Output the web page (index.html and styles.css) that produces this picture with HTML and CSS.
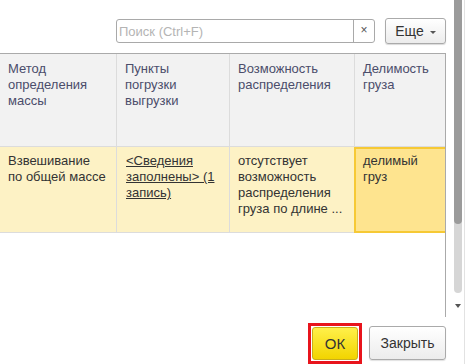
FILE: index.html
```html
<!DOCTYPE html>
<html>
<head>
    <meta charset="utf-8" />
    <title>Сведения о грузе</title>
    <link rel="stylesheet" href="styles.css">
</head>
<body>
    <div class="form">
        <div class="main">
            <!-- панель поиска -->
            <div class="toolbar">
                <div class="search">
                    <span class="search-text">Поиск (Ctrl+F)</span>
                    <span class="search-clear">×</span>
                </div>
                <div class="btn more">Еще <span class="caret"></span></div>
            </div>
            <!-- таблица -->
            <div class="table">
                <div class="cell head">Метод определения массы</div>
                <div class="cell head">Пункты погрузки выгрузки</div>
                <div class="cell head">Возможность распределения</div>
                <div class="cell head">Делимость груза</div>

                <div class="cell row">Взвешивание по&nbsp;общей массе</div>
                <div class="cell row"><a class="link">&lt;Сведения заполнены&gt; (1 запись)</a></div>
                <div class="cell row">отсутствует возможность распределения груза по длине ...</div>
                <div class="cell row current">делимый груз</div>
            </div>
            <!-- кнопки -->
            <div class="footer">
                <span class="focus"><span class="btn ok">ОК</span></span>
                <span class="btn close">Закрыть</span>
            </div>
        </div>
        <!-- полоса прокрутки -->
        <div class="scroll">
            <div class="track"><div class="thumb"></div></div>
            <div class="arrow"></div>
        </div>
        <div class="edge"></div>
    </div>
</body>
</html>
```

FILE: styles.css
```css
/*сброс*/
html, body{
    margin: 0;
    padding: 0;
}
body{
    width: 469px;
    height: 364px;
    overflow: hidden;
    background: #fff;
    font-family: "Liberation Sans", Arial, sans-serif;
    font-size: 13px;
    color: #333;
}
.form{
    display: flex;
    height: 364px;
}
.main{
    width: 446px;
    display: flex;
    flex-direction: column;
}
/*панель поиска*/
.toolbar{
    height: 53px;
    box-sizing: border-box;
    padding-top: 18px;
    display: flex;
    justify-content: flex-end;
    align-items: flex-start;
}
.search{
    margin-top: 1px;
    width: 259px;
    height: 24px;
    box-sizing: border-box;
    border: 1px solid #a9a9a9;
    border-radius: 3px;
    display: flex;
    align-items: center;
}
.search-text{
    flex: 1;
    padding-left: 2px;
    color: #b4b4b4;
}
.search-clear{
    width: 20px;
    height: 22px;
    line-height: 21px;
    text-align: center;
    border-left: 1px solid #a9a9a9;
    color: #555;
    font-size: 12px;
}
.btn{
    box-sizing: border-box;
    border: 1px solid #aaa;
    border-radius: 3px;
    background: linear-gradient(#ffffff, #ececec);
    display: flex;
    align-items: center;
    justify-content: center;
    color: #333;
}
.more{
    margin-left: 10px;
    width: 61px;
    height: 26px;
    font-size: 14px;
    box-shadow: 0 1px 1px rgba(0,0,0,0.15);
}
.caret{
    margin-left: 6px;
    margin-top: 2px;
    border-left: 3px solid transparent;
    border-right: 3px solid transparent;
    border-top: 3px solid #555;
}
/*таблица*/
.table{
    height: 264px;
    box-sizing: border-box;
    border-top: 1px solid #aaa;
    border-right: 1px solid #aaa;
    display: grid;
    grid-template-columns: 117px 113px 125px 90px;
    grid-template-rows: 93px 86px;
    align-content: start;
}
.cell{
    box-sizing: border-box;
    border-right: 1px solid #dcdcdc;
    border-bottom: 1px solid #dcdcdc;
    padding: 7px 8px 0 8px;
    line-height: 16px;
}
.head{
    background: #f2f2f2;
    color: #4b4d6b;
}
.row{
    background: #fdf2c5;
    padding-top: 6px;
}
.row:nth-child(6){
    padding-left: 9px;
}
.link{
    color: #333;
    text-decoration: underline;
}
.current{
    border: 2px solid #f6c935;
    background: #fee48f;
    padding: 4px 6px 0 7px;
    margin-left: -1px;
}
.head:nth-child(4), .row:nth-child(8){
    border-right: none;
}
/*кнопки*/
.footer{
    flex: 1;
    display: flex;
    justify-content: flex-end;
    align-items: flex-start;
    padding-top: 6px;
}
.focus{
    border: 3px solid #e8141c;
    padding: 1px;
}
.ok{
    width: 46px;
    height: 33px;
    background: linear-gradient(#fff04a, #f2d400);
    border-color: #c9ad1c;
    font-size: 15px;
    color: #333;
}
.close{
    margin-left: 7px;
    margin-top: 3px;
    width: 77px;
    height: 34px;
    font-size: 14px;
    box-shadow: 0 1px 1px rgba(0,0,0,0.12);
}
/*прокрутка*/
.scroll{
    width: 18px;
    height: 317px;
    padding-left: 8px;
    box-sizing: border-box;
}
.track{
    width: 8px;
    height: 293px;
    background: #d6d6d6;
    border-radius: 0 0 4px 4px;
}
.thumb{
    height: 224px;
    background: #9b9b9b;
    border-radius: 0 0 4px 4px;
}
.arrow{
    margin: 11px 0 0 1px;
    width: 0;
    border-left: 3px solid transparent;
    border-right: 3px solid transparent;
    border-top: 4px solid #555;
}
.edge{
    width: 1px;
    background: #e2e2e2;
}
```
